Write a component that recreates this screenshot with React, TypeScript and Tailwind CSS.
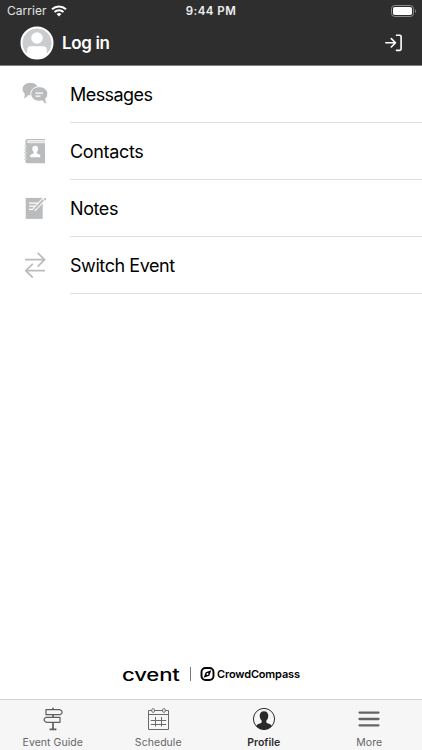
import type { ReactNode } from "react";

interface MenuItem {
  label: string;
  icon: ReactNode;
  textClass: string;
}

interface TabItem {
  label: string;
  icon: ReactNode;
  active?: boolean;
}

function MessagesIcon() {
  return (
    <svg width="28" height="28" viewBox="0 0 28 28" fill="#b9bbbd">
      <path d="M9.5 2.7c4.2 0 7.6 2.8 7.6 6.3s-3.4 6.4-7.6 6.4c-.8 0-1.6-.1-2.4-.3-1.2 1.7-2.5 2.9-4.5 3.4 1-1.4 1.4-3 1-5-1.3-1.2-2-2.7-2-4.5 0-3.5 3.6-6.3 7.9-6.3z" />
      <path
        d="M18.3 6.7c4.8 0 8.5 3.2 8.5 7.2 0 1.8-.8 3.4-2 4.6 0 2.1.5 3.9 1.700 5.600-2.300-.5-4-1.700-5.200-3.400-.9.3-1.900.5-3 .5-4.700 0-8.500-3.200-8.500-7.300s3.800-7.200 8.500-7.200z"
        stroke="#fff"
      />
      <path d="M14.500 13.200H22M14.500 16.200h5" stroke="#fff" strokeWidth="1.3" />
    </svg>
  );
}

function ContactsIcon() {
  return (
    <svg width="28" height="28" viewBox="0 0 28 28" fill="#b9bbbd">
      <path d="M6.5 2H24v24.3H6.2a1.8 1.8 0 0 1-1.8-1.8V4.1C4.4 2.9 5.300 2 6.500 2z" />
      <path
        d="M24 3.500H7.200q-1 0-1 1.100t1 1.100H24"
        stroke="#fff"
        strokeWidth=".7"
        fill="#dcddde"
      />
      <path
        d="M3.200 9h2.200M3.200 12.300h2.200M3.200 15.600h2.200M3.200 18.900h2.200M3.200 22.200h2.200"
        stroke="#fff"
        strokeWidth="1.3"
      />
      <path
        d="M3.200 9h1.800M3.200 12.300h1.800M3.200 15.600h1.800M3.200 18.900h1.800M3.200 22.200h1.800"
        stroke="#b9bbbd"
        strokeWidth=".8"
      />
      <path
        d="M14.200 8.800c1.900 0 2.900 1.200 2.900 2.900 0 1.400-.6 2.600-1.300 3.200v1.300c.8.700 3.500.8 3.500 2.800v1.300H9.200V19c0-2 2.700-2.100 3.500-2.800v-1.300c-.8-.6-1.400-1.800-1.400-3.200 0-1.700 1-2.900 2.900-2.900z"
        fill="#fff"
      />
    </svg>
  );
}

function NotesIcon() {
  return (
    <svg width="28" height="28" viewBox="0 0 28 28" fill="none">
      <path d="M4.7 3.900h17v21h-17z" fill="#b9bbbd" />
      <path d="M8 9.200h9M8 12.200h6.500M8 15.300h4" stroke="#fff" strokeWidth="1.2" />
      <path d="M12.800 15.900L23.300 4.800" stroke="#fff" strokeWidth="4" />
      <path d="M13.900 14.800l8.400-8.900" stroke="#b9bbbd" strokeWidth="2" />
      <path
        d="M11.700 16.900l.9-2.800 1.900 1.700zM22.500 4.900l1.400-1.200 1.700 1.500-1.200 1.400z"
        fill="#b9bbbd"
      />
    </svg>
  );
}

function SwitchIcon() {
  return (
    <svg
      width="28"
      height="28"
      viewBox="0 0 28 28"
      fill="none"
      stroke="#b9bbbd"
      strokeWidth="1.7"
    >
      <path d="M4 8.700h19M16.600 1.800l7 6.900-7 6.900M24 19.700H5M11.800 12.800l-7 6.900 7 6.900" />
    </svg>
  );
}

function SignpostIcon() {
  return (
    <svg
      width="24"
      height="24"
      viewBox="0 0 24 24"
      fill="none"
      stroke="#5f5f5f"
      strokeWidth="1.2"
      strokeLinejoin="round"
    >
      <path d="M5 2.700h14q2.200 1 2.200 2.500T19 7.700H5zM19 10.300H5.200Q3 11.300 3 12.800t2.200 2.500H19z" />
      <path d="M12 .8v2M12 7.600v2.800M12 15.200v7M8.600 22.400h6.800" strokeWidth="1.7" />
    </svg>
  );
}

function CalendarIcon() {
  return (
    <svg
      width="24"
      height="24"
      viewBox="0 0 24 24"
      fill="none"
      stroke="#6a6a6a"
    >
      <path d="M5.500 3.500h-3v19h20v-19h-3M8.500 3.500h8M2.500 7.500h20" />
      <rect x="5.8" y="1.7" width="2.6" height="3.6" rx="1" />
      <rect x="16.6" y="1.7" width="2.6" height="3.6" rx="1" />
      <path d="M4.800 13.500h15.400M4.800 17.500h15.400M9.500 10v9.500M15.500 10v9.500" />
    </svg>
  );
}

function ProfileIcon() {
  return (
    <svg width="24" height="24" viewBox="0 0 24 24" fill="none">
      <circle cx="12" cy="12" r="10.6" stroke="#2d2d2d" />
      <path
        d="M12 4.300c2.700 0 4.300 1.800 4.300 4.500 0 2.200-1 3.900-2 4.900v1.700c1 1 4.200 1.200 5.600 3.500a10.600 10.600 0 0 1-15.800 0c1.400-2.300 4.600-2.500 5.600-3.500v-1.700c-1-1-2-2.700-2-4.900 0-2.700 1.600-4.500 4.300-4.500z"
        fill="#2a2a2a"
      />
    </svg>
  );
}

function MoreIcon() {
  return (
    <svg
      width="24"
      height="24"
      viewBox="0 0 24 24"
      stroke="#646464"
      strokeWidth="2.3"
      strokeLinecap="round"
    >
      <path d="M2.500 5.600h19M2.500 12h19M2.500 18.300h19" />
    </svg>
  );
}

const menuItems: MenuItem[] = [
  { label: "Messages", icon: <MessagesIcon />, textClass: "tracking-[-0.55px]" },
  { label: "Contacts", icon: <ContactsIcon />, textClass: "tracking-[-0.33px]" },
  { label: "Notes", icon: <NotesIcon />, textClass: "tracking-[-0.4px]" },
  { label: "Switch Event", icon: <SwitchIcon />, textClass: "tracking-[-0.43px]" },
];

const tabs: TabItem[] = [
  { label: "Event Guide", icon: <SignpostIcon /> },
  { label: "Schedule", icon: <CalendarIcon /> },
  { label: "Profile", icon: <ProfileIcon />, active: true },
  { label: "More", icon: <MoreIcon /> },
];

function StatusBar() {
  return (
    <div className="grid h-[22px] grid-cols-3 items-center pr-[5px] pl-[7px]">
      <div className="flex items-center gap-1">
        <span className="text-[12px] leading-[22px] tracking-[0.05px] text-[#e4e4e4]">
          Carrier
        </span>
        <svg width="16" height="12" viewBox="0 0 16 12" fill="none" stroke="#fff">
          <path d="M1 4.300a10.200 10.200 0 0 1 14 0" strokeWidth="1.9" />
          <path d="M3.500 7a6.600 6.600 0 0 1 9 0" strokeWidth="1.8" />
          <path d="M8 11.500L5.600 9.100a3.500 3.500 0 0 1 4.800 0z" fill="#fff" stroke="none" />
        </svg>
      </div>
      <span className="pt-px pr-[2px] text-center text-[11.5px] leading-[21px] font-semibold tracking-[0.45px] text-[#eee]">
        9:44 PM
      </span>
      <div className="flex justify-end">
        <svg width="26" height="12" viewBox="0 0 26 12" fill="none">
          <rect x=".5" y=".5" width="22" height="11" rx="3.2" stroke="#8b8b8b" />
          <rect x="2" y="2" width="19" height="8" rx="1.8" fill="#fff" />
          <path d="M24 4.200c1.300.5 1.300 3.100 0 3.600z" fill="#8b8b8b" />
        </svg>
      </div>
    </div>
  );
}

function Header() {
  return (
    <header className="h-[66px] shrink-0 border-b border-[#7f7f7f] bg-[#2e2e2e] text-white">
      <StatusBar />
      <div className="flex h-[43px] items-center pr-[19px] pl-5">
        <svg className="mb-px" width="34" height="34" viewBox="0 0 34 34">
          <circle cx="17" cy="17" r="15.5" fill="#cbccce" stroke="#fff" strokeWidth="2" />
          <circle cx="17" cy="12" r="5.8" fill="#fff" />
          <path
            d="M7.200 29.500v-5.800q0-3.500 3.500-3.500h12.600q3.500 0 3.500 3.500v5.800A15.500 15.500 0 0 1 7.200 29.500z"
            fill="#fff"
          />
        </svg>
        <span className="ml-2 flex-1 text-[17px] font-semibold tracking-[-0.35px]">
          Log in
        </span>
        <svg
          width="18"
          height="18"
          viewBox="0 0 18 18"
          fill="none"
          stroke="#fff"
          strokeWidth="1.6"
          strokeLinecap="round"
          strokeLinejoin="round"
          className="mb-[2px]"
        >
          <path d="M.8 8.800H10.300M6.300 4.600l4.200 4.200L6.300 13M11.500 1.200h3.300q1.300 0 1.300 1.300v12.600q0 1.300-1.300 1.300h-3.300" />
        </svg>
      </div>
    </header>
  );
}

function Branding() {
  return (
    <div className="flex h-[18px] items-center pl-[122px] text-black">
      <span className="block w-[58px]">
        <span className="block origin-left scale-x-[1.3] pt-px text-[17px] leading-[18px] font-medium tracking-[-0.1px]">
          cvent
        </span>
      </span>
      <span className="ml-[10px] h-[14px] w-px bg-[#777]" />
      <svg className="ml-[9px]" width="15" height="14" viewBox="0 0 15 14" fill="none">
        <rect x="1.5" y="1" width="12" height="12" rx="4" stroke="#000" strokeWidth="1.9" />
        <path d="M11.300 3.200L9.300 8.700l-5.600 2.100 2-5.500z" fill="#000" />
        <circle cx="7.5" cy="7" r="1" fill="#fff" />
      </svg>
      <span className="ml-[2px] text-[11px] font-semibold tracking-[-0.16px]">
        CrowdCompass
      </span>
    </div>
  );
}

export default function App() {
  return (
    <div className="flex h-[750px] w-[422px] flex-col overflow-hidden bg-white font-['Inter','Liberation_Sans',sans-serif]">
      <Header />

      <main className="flex flex-1 flex-col">
        {menuItems.map((item) => (
          <button
            key={item.label}
            type="button"
            className="flex h-[57px] items-stretch pl-[21px] text-left"
          >
            <span className="flex w-[49px] items-center pb-px">{item.icon}</span>
            <span
              className={`flex flex-1 items-center border-b border-[#dedede] text-[18px] text-black ${item.textClass}`}
            >
              {item.label}
            </span>
          </button>
        ))}
        <div className="mt-auto pb-4">
          <Branding />
        </div>
      </main>

      <nav className="grid h-[51px] shrink-0 grid-cols-4 border-t border-[#d2d2d2] bg-[#f6f6f6]">
        {tabs.map((tab) => (
          <button
            key={tab.label}
            type="button"
            className={`flex flex-col items-center pt-[7px] text-[10.5px] leading-[14px] ${
              tab.active
                ? "font-semibold text-[#2d2d2d]"
                : "tracking-[0.05px] text-[#666]"
            }`}
          >
            {tab.icon}
            <span className="mt-[5px]">{tab.label}</span>
          </button>
        ))}
      </nav>
    </div>
  );
}
